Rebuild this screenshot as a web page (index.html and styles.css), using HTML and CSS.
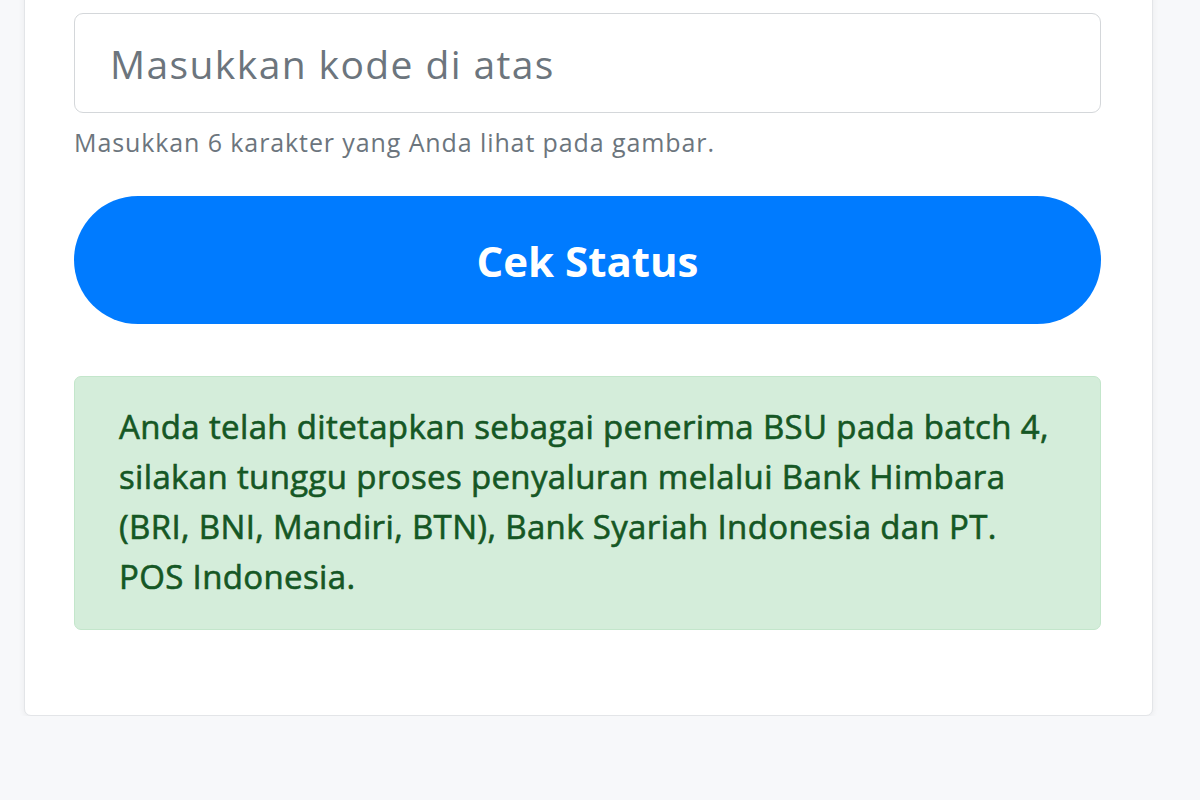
FILE: index.html
```html
<!DOCTYPE html>
<html lang="id">
<head>
  <meta charset="UTF-8">
  <meta name="viewport" content="width=device-width, initial-scale=1.0">
  <title>Cek Status BSU</title>
  <link rel="stylesheet" href="styles.css">
</head>
<body>
  <div class="card">
    <form class="status-form">
      <div class="form-group">
        <input type="text" class="form-control" placeholder="Masukkan kode di atas">
        <small class="form-text">Masukkan 6 karakter yang Anda lihat pada gambar.</small>
      </div>
      <button type="button" class="btn-primary">Cek Status</button>
    </form>
    <div class="alert-success">
      Anda telah ditetapkan sebagai penerima BSU pada batch 4, silakan tunggu proses penyaluran melalui Bank Himbara (BRI, BNI, Mandiri, BTN), Bank Syariah Indonesia dan PT. POS Indonesia.
    </div>
  </div>
</body>
</html>
```

FILE: styles.css
```css
/* halaman cek status */
body {
  font-family: 'Open Sans', 'Noto Sans', sans-serif;
  background-color: #f7f8fa;
  margin: 0;
  padding: 0;
}

.card {
  width: 1027px;
  margin: -20px 0 0 24px;
  padding: 32px 51px 85px 49px;
  background-color: #fff;
  border: 1px solid #e3e5e8;
  border-radius: 7px;
  box-shadow: 0 2px 6px rgba(0, 0, 0, 0.06);
}

.form-group {
  display: flex;
  flex-direction: column;
}

.form-control {
  box-sizing: border-box;
  width: 100%;
  height: 100px;
  padding: 0 35px;
  font-family: inherit;
  font-size: 39px;
  letter-spacing: 1.4px;
  color: #495057;
  background-color: #fff;
  border: 1.5px solid #d4d7da;
  border-radius: 9px;
  outline: none;
}

.form-control::placeholder {
  color: #6c757d;
}

.form-text {
  margin-top: 12px;
  font-size: 25px;
  letter-spacing: 0.9px;
  color: #6c757d;
}

.btn-primary {
  display: block;
  width: 100%;
  height: 128px;
  margin-top: 37px;
  font-family: inherit;
  font-size: 42px;
  font-weight: 700;
  color: #fff;
  background-color: #007bff;
  border: none;
  border-radius: 64px;
  cursor: pointer;
}

.alert-success {
  margin-top: 52px;
  padding: 25px 44px 27px;
  font-size: 33px;
  font-weight: 400;
  letter-spacing: 0.35px;
  line-height: 50px;
  color: #155724;
  -webkit-text-stroke: 0.6px #155724;
  background-color: #d4edda;
  border: 1.5px solid #c3e6cb;
  border-radius: 7px;
}
```
